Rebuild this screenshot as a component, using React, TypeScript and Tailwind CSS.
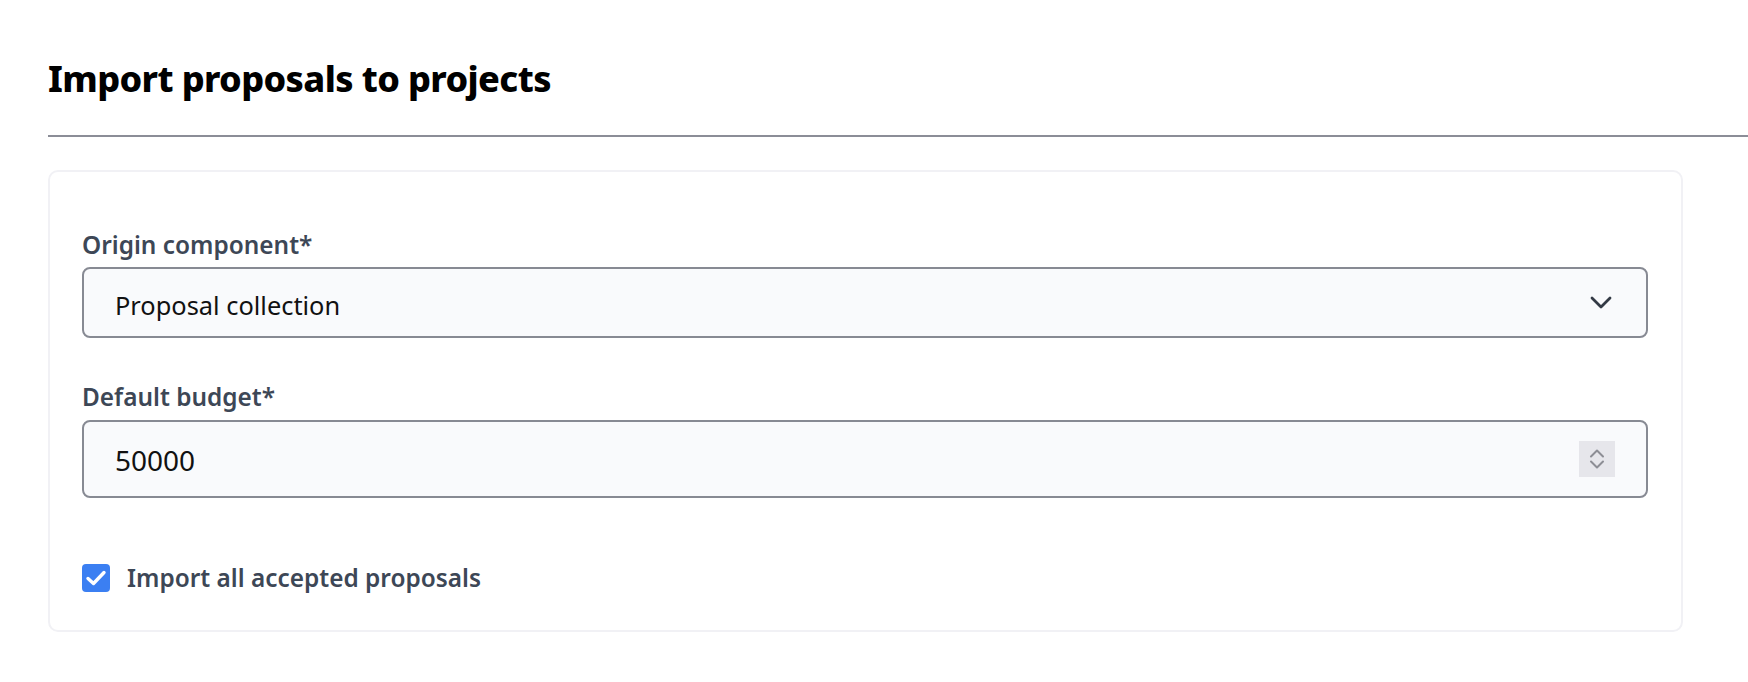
import React from "react";

export default function App() {
  return (
    <div className="w-[1748px] h-[682px] bg-white overflow-hidden" style={{ fontFamily: '"Noto Sans", "Liberation Sans", sans-serif' }}>
      <div className="pl-[48px] pt-[57px]">
        <h1 className="text-[36px] leading-[44px] font-extrabold text-black tracking-[-0.6px]">Import proposals to projects</h1>
      </div>
      <div className="ml-[48px] mt-[34px] h-[2px] bg-[#8b8d97]" />
      <div className="ml-[48px] mt-[33px] w-[1635px] border-2 border-[#f1f1f5] rounded-[10px] pt-[57px] pb-[36px] pl-[32px] pr-[33px]">
        <label className="block text-[24.4px] leading-[32px] font-semibold text-[#3d4756]">Origin component*</label>
        <div className="mt-[6px] h-[71px] border-2 border-[#878a93] rounded-[8px] bg-[#f9fafc] flex items-center justify-between pl-[31px] pr-[34px]">
          <span className="text-[25.4px] leading-[32px] text-[#111111] pt-[4px]">Proposal collection</span>
          <svg width="22" height="13" viewBox="0 0 22 13" fill="none">
            <path d="M2 2 L11 11 L20 2" stroke="#333a45" strokeWidth="2.8" strokeLinecap="round" strokeLinejoin="round" />
          </svg>
        </div>
        <label className="mt-[43px] block text-[24.4px] leading-[32px] font-semibold text-[#3d4756]">Default budget*</label>
        <div className="mt-[7px] h-[78px] border-2 border-[#878a93] rounded-[8px] bg-[#f9fafc] flex items-center justify-between pl-[31px] pr-[31px]">
          <span className="text-[28px] leading-[34px] text-[#111111] pt-[2px]">50000</span>
          <div className="w-[36px] h-[36px] bg-[#e6e6eb] flex flex-col items-center justify-center gap-[2px]">
            <svg width="16" height="9" viewBox="0 0 16 9" fill="none">
              <path d="M2 7.5 L8 1.5 L14 7.5" stroke="#8d8e95" strokeWidth="2" strokeLinecap="round" strokeLinejoin="round" />
            </svg>
            <svg width="16" height="9" viewBox="0 0 16 9" fill="none">
              <path d="M2 1.5 L8 7.5 L14 1.5" stroke="#8d8e95" strokeWidth="2" strokeLinecap="round" strokeLinejoin="round" />
            </svg>
          </div>
        </div>
        <div className="mt-[64px] flex items-center gap-[17px]">
          <div className="w-[28px] h-[28px] rounded-[4px] bg-[#3b7ff2] flex items-center justify-center">
            <svg width="22" height="18" viewBox="0 0 22 18" fill="none">
              <path d="M3 9.5 L8.5 14.5 L19 3.5" stroke="white" strokeWidth="3.4" strokeLinecap="round" strokeLinejoin="round" />
            </svg>
          </div>
          <span className="text-[24.4px] leading-[32px] font-semibold text-[#3d4756]">Import all accepted proposals</span>
        </div>
      </div>
    </div>
  );
}
